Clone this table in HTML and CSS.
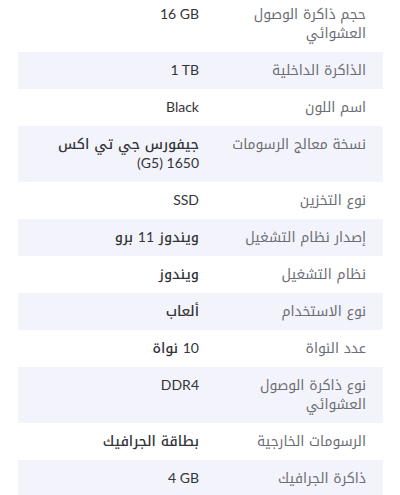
FILE: index.html
```
<!DOCTYPE html>
<html lang="ar" dir="rtl">
<head>
<meta charset="utf-8">
<link rel="stylesheet" href="styles.css">
</head>
<body>
<table class="specs">
<tbody>
<tr><th>حجم ذاكرة الوصول العشوائي</th><td dir="ltr"><span class="lat">16 GB</span></td></tr>
<tr class="alt"><th>الذاكرة الداخلية</th><td dir="ltr"><span class="lat">1 TB</span></td></tr>
<tr><th>اسم اللون</th><td><span class="lat">Black</span></td></tr>
<tr class="alt"><th>نسخة معالج الرسومات</th><td>جيفورس جي تي اكس <span class="lat">1650&nbsp;(G5)</span></td></tr>
<tr><th>نوع التخزين</th><td><span class="lat">SSD</span></td></tr>
<tr class="alt"><th>إصدار نظام التشغيل</th><td>ويندوز <span class="lat">11</span> برو</td></tr>
<tr><th>نظام التشغيل</th><td>ويندوز</td></tr>
<tr class="alt"><th>نوع الاستخدام</th><td>ألعاب</td></tr>
<tr><th>عدد النواة</th><td><span class="lat">10</span> نواة</td></tr>
<tr class="alt"><th>نوع ذاكرة الوصول العشوائي</th><td dir="ltr"><span class="lat">DDR4</span></td></tr>
<tr><th>الرسومات الخارجية</th><td>بطاقة الجرافيك</td></tr>
<tr class="alt"><th>ذاكرة الجرافيك</th><td dir="ltr"><span class="lat">4 GB</span></td></tr>
</tbody>
</table>
</body>
</html>
```
FILE: styles.css
```
html, body {
  margin: 0;
  padding: 0;
  background: #ffffff;
}
body {
  font-family: "Noto Kufi Arabic", "Noto Sans Arabic", "DejaVu Sans", sans-serif;
  font-size: 14px;
}
.specs {
  width: 365px;
  margin: -4px 17px 0 18px;
  border-collapse: collapse;
}
.specs th,
.specs td {
  line-height: 19px;
  padding-top: 9px;
  padding-bottom: 9px;
  text-align: right;
  vertical-align: top;
  font-weight: normal;
}
.specs th {
  width: 162px;
  padding-left: 4px;
  padding-right: 17px;
  color: #6b6e74;
}
.specs td {
  padding-left: 17px;
  padding-right: 1px;
  color: #333438;
  font-weight: 500;
}
.specs .alt {
  background: #f3f4fb;
}
.lat {
  font-family: Lato, "Open Sans", sans-serif;
  font-size: 14px;
  line-height: 1;
  font-weight: normal;
}
```
